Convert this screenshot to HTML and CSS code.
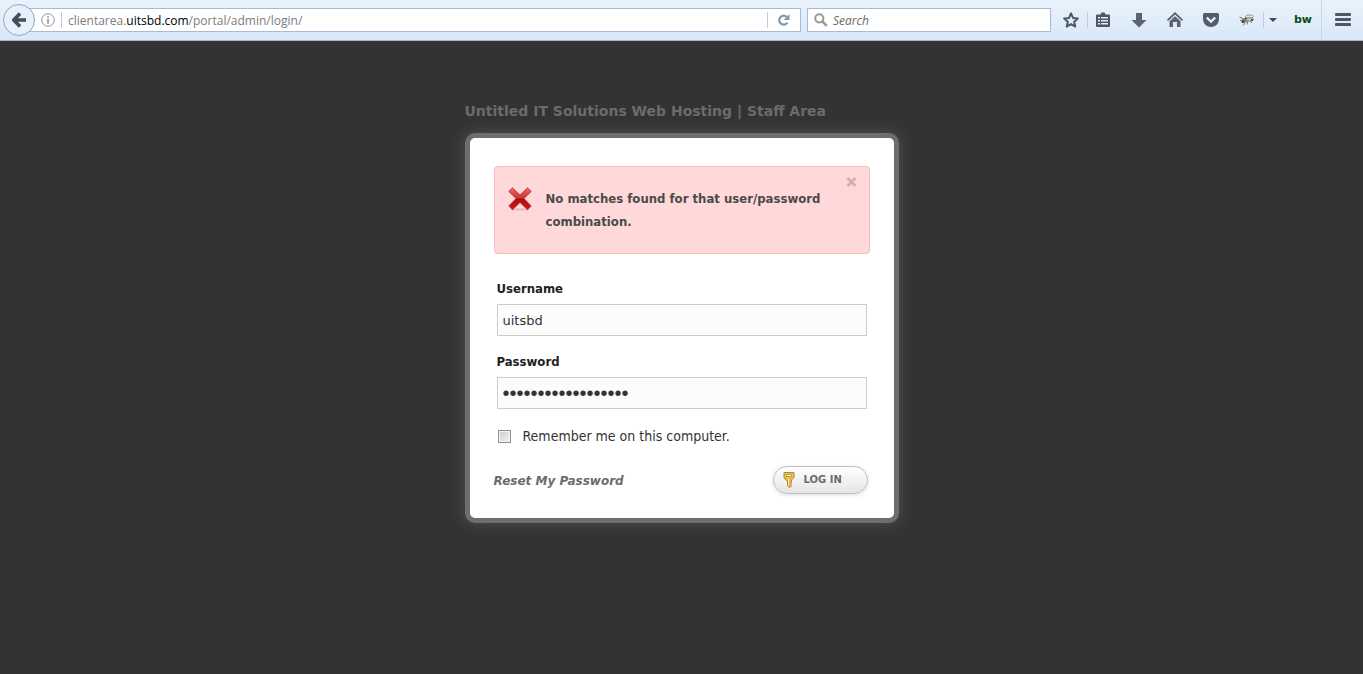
FILE: index.html
```html
<!DOCTYPE html>
<html lang="en">
<head>
<meta charset="utf-8">
<title>Staff Area Login</title>
<link rel="stylesheet" href="styles.css">
</head>
<body>
<header class="toolbar">
  <button class="back" type="button" aria-label="Back">
    <svg width="14" height="16" viewBox="0 0 14 16"><path d="M8 1.5L1.8 8 8 14.5M2 8h12" fill="none" stroke="#424f5a" stroke-width="3.600" stroke-linejoin="miter"/></svg>
  </button>
  <div class="urlbar">
    <svg width="14" height="14" viewBox="0 0 14 14"><circle cx="7" cy="7" r="6.3" fill="none" stroke="#929292" stroke-width="1"/><path d="M6.2 3h1.6v1.6H6.2zM6.2 5.8h1.6v5H6.2z" fill="#929292"/></svg>
    <span class="rule"></span>
    <span class="url">clientarea.<span class="domain">uitsbd.com</span>/portal/admin/login/</span>
    <span class="rule"></span>
    <button class="tool reload" type="button" aria-label="Reload">
      <svg width="12" height="12" viewBox="0 0 12 12"><path d="M9.5 8.7A4.5 4.5 0 1 1 9 3" fill="none" stroke="#8798a8" stroke-width="2.2"/><path d="M11.5 0v6H5.5z" fill="#8798a8"/></svg>
    </button>
  </div>
  <div class="search">
    <svg width="14" height="14" viewBox="0 0 14 14"><circle cx="5.3" cy="5.3" r="4.1" fill="none" stroke="#999" stroke-width="2"/><path d="M8.3 8.3l4.5 4.5" stroke="#999" stroke-width="2.6"/></svg>
    <input class="search-input" type="text" placeholder="Search" aria-label="Search">
  </div>
  <nav class="tools" aria-label="Browser tools">
    <button class="tool" type="button" aria-label="Bookmark"><svg width="18" height="18" viewBox="0 0 18 18"><path d="M9 2.4l2 4.5 4.9.5-3.700 3.300 1.100 4.900L9 13.100l-4.300 2.500 1.100-4.900L2.100 7.400l4.900-.5z" fill="none" stroke="#4c5963" stroke-width="2" stroke-linejoin="round"/></svg></button>
    <span class="rule"></span>
    <button class="tool" type="button" aria-label="Bookmarks list"><svg width="18" height="18" viewBox="0 0 18 18"><path d="M3 3.500h3.500l1-2h3l1 2H15q1 0 1 1V15q0 1-1 1H3q-1 0-1-1V4.500q0-1 1-1z" fill="#4c5963"/><path d="M4 6h2v1.500H4zM7 6h7v1.500H7zM4 9h2v1.500H4zM7 9h7v1.500H7zM4 12h2v1.500H4zM7 12h7v1.500H7z" fill="#e4eefa"/></svg></button>
    <button class="tool" type="button" aria-label="Downloads"><svg width="18" height="18" viewBox="0 0 18 18"><path d="M6 2h6v7h4.500L9 16.500 1.500 9H6z" fill="#59656f"/></svg></button>
    <button class="tool" type="button" aria-label="Home"><svg width="18" height="18" viewBox="0 0 18 18"><path d="M1.500 9.300L9 2.300l7.500 7" fill="none" stroke="#59656f" stroke-width="1.800"/><path d="M9 5.200l5.500 5V16H11v-5H7v5H3.500v-5.800z" fill="#59656f"/></svg></button>
    <button class="tool" type="button" aria-label="Pocket"><svg width="18" height="18" viewBox="0 0 18 18"><path d="M2.500 2h13q1.500 0 1.500 1.500V8q0 4.500-4 7-4 1.800-8 0-4-2.500-4-7V3.500Q1 2 2.500 2z" fill="#515e69"/><path d="M4.800 6.500L9 10.700l4.200-4.200" fill="none" stroke="#edf4fc" stroke-width="2.200"/></svg></button>
    <button class="tool" type="button" aria-label="Firebug"><svg width="18" height="18" viewBox="0 0 18 18"><path d="M1.500 6l4 2M2 9.500l3 .5M5 14.500l2-3M9 13.500l1-3M14 12l-2-2" stroke="#777" fill="none"/><ellipse cx="7" cy="9.500" rx="3.500" ry="2" fill="#8b8b84"/><ellipse cx="11.500" cy="5.500" rx="4" ry="1.500" fill="#e2e2dc" stroke="#999"/><ellipse cx="12" cy="8.500" rx="3.500" ry="1.500" fill="#d0d0ca" stroke="#888"/><circle cx="5" cy="10.500" r="1.500" fill="#444"/><circle cx="14" cy="9" r="1" fill="#343434"/><circle cx="7.500" cy="7.500" r="1" fill="#333"/></svg></button>
    <span class="rule"></span>
    <button class="tool more" type="button" aria-label="Firebug options"><svg width="8" height="4" viewBox="0 0 8 4"><path d="M0 0h8L4 4z" fill="#424a52"/></svg></button>
    <button class="tool builtwith" type="button">bw</button>
  </nav>
  <button class="tool menu" type="button" aria-label="Menu"><svg width="16" height="14" viewBox="0 0 16 14"><path d="M1 0h14q1 0 1 1v1q0 1-1 1H1q-1 0-1-1V1q0-1 1-1zM1 5h14q1 0 1 1v1q0 1-1 1H1q-1 0-1-1V6q0-1 1-1zM1 10h14q1 0 1 1v1q0 1-1 1H1q-1 0-1-1v-1q0-1 1-1z" fill="#4c5963"/></svg></button>
</header>

<main class="login">
  <h1 class="title">Untitled IT Solutions Web Hosting | Staff Area</h1>
  <section class="card">
    <div class="alert" role="alert">
      <svg class="alert-icon" width="24" height="24" viewBox="0 0 24 24">
        <defs><linearGradient id="cross" x1="0" y1="0" x2="0" y2="1"><stop offset="0" stop-color="#f06a68"/><stop offset=".45" stop-color="#c93535"/><stop offset=".52" stop-color="#a90e0e"/><stop offset="1" stop-color="#db1515"/></linearGradient></defs>
        <ellipse cx="12" cy="22.500" rx="10" ry="1" fill="#b88" opacity=".35"/>
        <path d="M4.500 .8L12 8l7.500-7.200 3.700 3.700L16 11.500l7.200 7.500-3.700 3.700L12 15.500l-7.500 7.200L.8 19 8 11.500.8 4.500z" fill="url(#cross)" stroke="#ad3030" stroke-width=".8" stroke-linejoin="round"/>
      </svg>
      <p class="alert-text">No matches found for that user/password combination.</p>
      <button class="close" type="button" aria-label="Close"><svg width="11" height="10" viewBox="0 0 11 10"><path d="M1.500 1l8 8M9.500 1l-8 8" stroke="#cfb0b1" stroke-width="2.800"/></svg></button>
    </div>
    <form class="form" id="login-form">
      <label class="label" for="username">Username</label>
      <input class="field" id="username" type="text" value="uitsbd">
      <label class="label" for="password">Password</label>
      <input class="field password" id="password" type="password" value="abcdefghijklmnopqr">
      <div class="remember">
        <input class="check" id="remember" type="checkbox">
        <label for="remember">Remember me on this computer.</label>
      </div>
    </form>
    <div class="actions">
      <a class="reset" href="#">Reset My Password</a>
      <button class="submit" type="submit" form="login-form">
        <svg width="12" height="16" viewBox="0 0 12 16"><path d="M1 .5h10v5L8.500 8v2l-1 1 1 1-1 1 1 1-1.500 1.500L4.500 14V8.500h-1L1 6z" fill="#e8bd55" stroke="#b88632"/><path d="M3.500 2.500h5v2h-5z" fill="#fff" stroke="#b99a36"/><path d="M5.500 7v7" stroke="#fae8a2"/></svg>
        Log In
      </button>
    </div>
  </section>
</main>
</body>
</html>
```
FILE: styles.css
```css
* { box-sizing: border-box; }
body {
  margin: 0;
  min-height: 100vh;
  background: #333;
  color: #333;
  font: 13px/23px "DejaVu Sans", Verdana, sans-serif;
}
button { padding: 0; border: 0; background: none; }
svg { display: block; flex: none; }

.toolbar {
  display: flex;
  align-items: center;
  height: 41px;
  padding-left: 3px;
  background: linear-gradient(#e9f2fc, #d9e8f7);
  border-bottom: 1px solid #a5b9cf;
  font: 12px/16px "Open Sans", "Segoe UI", sans-serif;
}
.back {
  display: flex;
  align-items: center;
  justify-content: center;
  flex: none;
  width: 32px;
  height: 32px;
  margin-right: -6px;
  z-index: 1;
  border: 1px solid #93a8bb;
  border-radius: 50%;
  background: #e6f0fb;
}
.urlbar, .search {
  display: flex;
  align-items: center;
  height: 24px;
  border: 1px solid #a9bbd0;
  background: #fff;
}
.urlbar { flex: 1; gap: 6px; padding-left: 11px; }
.rule { flex: none; width: 1px; height: 16px; background: #c2cdd8; }
.url { flex: 1; padding-top: 2px; color: #7c7c7c; white-space: nowrap; }
.domain { color: #000; }
.tool {
  display: flex;
  align-items: center;
  justify-content: center;
  flex: none;
  width: 36px;
  height: 32px;
}
.urlbar .reload { width: 32px; height: 22px; margin-left: -6px; }
.search { width: 244px; margin-left: 6px; padding-left: 6px; gap: 5px; }
.search-input {
  flex: 1;
  min-width: 0;
  padding: 2px 0 0;
  border: 0;
  outline: 0;
  background: none;
  font: inherit;
}
.search-input::placeholder { color: #6b6b6b; font-style: italic; }
.tools { display: flex; align-items: center; padding-left: 2px; }
.tools .rule { margin-right: -3px; }
.tools .tool + .rule { margin-left: -2px; }
.tools .more { width: 24px; }
.tools .builtwith {
  color: #064f0b;
  font: bold 11px/16px "DejaVu Sans", sans-serif;
}
.menu { width: 42px; height: 40px; border-left: 1px solid #c8d7e6; }

.login {
  width: 434px;
  max-width: 100%;
  margin: 0 auto;
  padding-top: 59px;
}
.title {
  margin: 0 0 10px;
  color: #6b6b6b;
  font: bold 14px/23px "DejaVu Sans", Verdana, sans-serif;
  white-space: nowrap;
}
.card {
  padding: 28px 24px 24px;
  border: 5px solid #6e6e6e;
  border-radius: 10px;
  background: #fff;
  box-shadow: 0 0 16px #505357;
}
.alert {
  display: flex;
  align-items: flex-start;
  min-height: 88px;
  padding: 20px 12px 20px 13px;
  border: 1px solid #f9b9b9;
  border-radius: 4px;
  background: #ffd8d9;
}
.alert-text {
  flex: 1;
  margin: 0 0 0 14px;
  color: #4a4a4a;
  font: bold 13px/23px "DejaVu Sans Condensed", Tahoma, sans-serif;
}
.close { margin-top: -10px; }
.form { padding: 23px 3px 0; }
.label {
  display: block;
  color: #222;
  font: bold 13px/23px "DejaVu Sans Condensed", Tahoma, sans-serif;
}
.field {
  display: block;
  width: 100%;
  height: 32px;
  margin: 4px 0 14px;
  padding: 0 5px;
  border: 1px solid #ccc;
  border-radius: 0;
  background: #fcfcfc;
  color: #333;
  font: 13px/23px "DejaVu Sans", Tahoma, sans-serif;
}
.password { font: 20px/23px "Liberation Sans", Arial, sans-serif; }
.remember {
  display: flex;
  align-items: center;
  gap: 12px;
  padding-top: 2px;
  font: 14px/23px "DejaVu Sans Condensed", Tahoma, sans-serif;
}
.check {
  appearance: none;
  width: 13px;
  height: 13px;
  margin: 0 0 0 1px;
  border: 1px solid #8e8f8f;
  background: linear-gradient(135deg, #c5c9d2, #f7f7f7);
  box-shadow: inset 0 0 0 1px #f4f4f4;
}
.actions {
  display: flex;
  align-items: center;
  justify-content: space-between;
  padding: 18px 2px 0 0;
}
.reset {
  padding-top: 2px;
  color: #6b6b6b;
  font: italic bold 12px/23px "DejaVu Sans", Verdana, sans-serif;
  text-decoration: none;
}
.submit {
  display: flex;
  align-items: center;
  gap: 9px;
  width: 95px;
  height: 28px;
  padding: 0 9px;
  border: 1px solid #bfbfbf;
  border-radius: 14px;
  background: linear-gradient(#fff, #e5e5e5);
  box-shadow: 0 1px 4px #ddd;
  color: #6b6b6b;
  font: bold 10px/16px "DejaVu Sans", Verdana, sans-serif;
  text-transform: uppercase;
  white-space: nowrap;
}
```
